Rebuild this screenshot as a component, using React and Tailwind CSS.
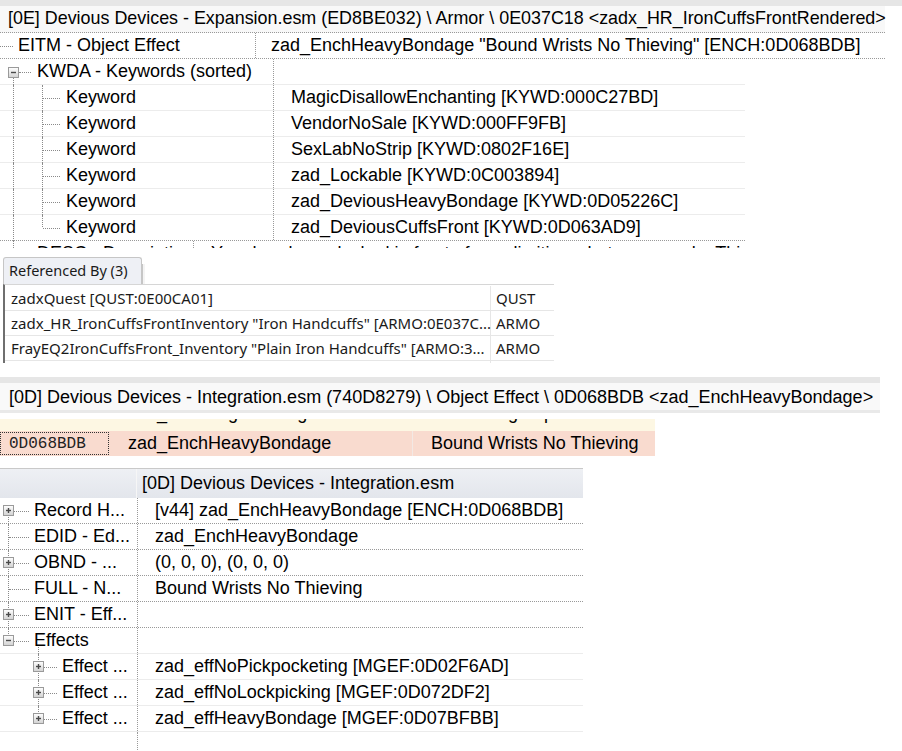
import React from "react";

const ARIAL = { fontFamily: '"Liberation Sans", Arial, sans-serif' };

function Box({ minus = false }) {
  return (
    <svg width="11" height="11" viewBox="0 0 11 11" className="block">
      <defs>
        <linearGradient id="bg" x1="0" y1="0" x2="0" y2="1">
          <stop offset="0" stopColor="#ffffff" />
          <stop offset="1" stopColor="#d2d2d2" />
        </linearGradient>
      </defs>
      <rect x="0.5" y="0.5" width="10" height="10" fill="url(#bg)" stroke="#9a9a9a" />
      <path d="M3 5.5h5" stroke="#4a4a4a" strokeWidth="1.4" />
      {!minus && <path d="M5.5 3v5" stroke="#4a4a4a" strokeWidth="1.4" />}
    </svg>
  );
}

function Guide({ x, top = 0, bottom = 0 }) {
  return (
    <span
      className="absolute border-l border-dotted border-[#8a8a8a]"
      style={{ left: x, top, bottom }}
    />
  );
}
function Tick({ x1, x2 }) {
  return (
    <span
      className="absolute top-1/2 border-t border-dotted border-[#8a8a8a]"
      style={{ left: x1, width: x2 - x1 }}
    />
  );
}

const keywords = [
  "MagicDisallowEnchanting [KYWD:000C27BD]",
  "VendorNoSale [KYWD:000FF9FB]",
  "SexLabNoStrip [KYWD:0802F16E]",
  "zad_Lockable [KYWD:0C003894]",
  "zad_DeviousHeavyBondage [KYWD:0D05226C]",
  "zad_DeviousCuffsFront [KYWD:0D063AD9]",
];

function Section1() {
  return (
    <div className="text-[18px] text-black" style={ARIAL}>
      <div className="h-[6px] bg-[#e6e6e6]" />
      <div className="h-[27px] w-[885px] bg-[#f8f8f8] pl-[8px] flex items-center whitespace-nowrap border-b border-dotted border-[#999] leading-none text-[17.9px]">
        [0E] Devious Devices - Expansion.esm (ED8BE032) \ Armor \ 0E037C18 &lt;zadx_HR_IronCuffsFrontRendered&gt;
      </div>
      <div className="h-[26px] w-[885px] flex border-b border-dotted border-[#999]">
        <div className="relative w-[256px] h-full border-r border-dotted border-[#999] flex items-center pl-[18px] whitespace-nowrap">
          <Tick x1={0} x2={13} />
          EITM - Object Effect
        </div>
        <div className="flex items-center pl-[15px] whitespace-nowrap">
          zad_EnchHeavyBondage "Bound Wrists No Thieving" [ENCH:0D068BDB]
        </div>
      </div>
      <div className="h-[26px] w-[745px] flex border-b border-[#ececec]">
        <div className="relative w-[274px] h-full border-r border-dotted border-[#999] flex items-center pl-[37px] whitespace-nowrap">
          <Guide x={13} top={18} bottom={-1} />
          <span className="absolute left-[8px] top-[8px]"><Box minus /></span>
          <Tick x1={19} x2={31} />
          KWDA - Keywords (sorted)
        </div>
        <div />
      </div>
      {keywords.map((k, i) => {
        const last = i === keywords.length - 1;
        return (
          <div
            key={k}
            className={
              "h-[26px] w-[745px] flex " +
              (last ? "border-b border-dotted border-[#999]" : "border-b border-[#ececec]")
            }
          >
            <div className="relative w-[274px] h-full border-r border-dotted border-[#999] flex items-center pl-[66px] whitespace-nowrap">
              <Guide x={13} top={0} bottom={-1} />
              <Guide x={42} top={0} bottom={last ? 13 : -1} />
              <Tick x1={43} x2={60} />
              Keyword
            </div>
            <div className="flex items-center pl-[17px] whitespace-nowrap">{k}</div>
          </div>
        );
      })}
      {/* clipped DESC row: only the tops of the letters show */}
      <div className="h-[7px] w-[745px] overflow-hidden flex">
        <div className="relative w-[274px] h-[7px] border-r border-dotted border-[#999] pl-[37px] whitespace-nowrap">
          <Guide x={13} top={0} bottom={0} />
          <div className="leading-[18px] mt-[3px]">DESC - Description</div>
        </div>
        <div className="pl-[17px] whitespace-nowrap leading-[18px] mt-[3px]">
          Your hands are locked in front of you, limiting what you can do. This device
        </div>
      </div>
    </div>
  );
}

const refs = [
  ["zadxQuest [QUST:0E00CA01]", "QUST"],
  ['zadx_HR_IronCuffsFrontInventory "Iron Handcuffs" [ARMO:0E037C...', "ARMO"],
  ['FrayEQ2IronCuffsFront_Inventory "Plain Iron Handcuffs" [ARMO:3...', "ARMO"],
];

function Section2() {
  return (
    <div
      className="mt-[9px] text-[15px] text-[#1a1a1a]"
      style={{ fontFamily: '"Noto Sans", "Open Sans", sans-serif' }}
    >
      <div className="flex items-end h-[27px] ml-[3px]">
        <div className="w-[139px] h-[27px] bg-[#eef0f5] border border-b-0 border-[#c6c6c6] rounded-t-[3px] flex items-center pl-[5px] whitespace-nowrap text-[14.5px]">
          Referenced By (3)
        </div>
        <div className="w-[3px] h-[20px] border-l border-[#c6c6c6] bg-[#f4f4f4]" />
      </div>
      <div className="ml-[3px] w-[551px] border-l-[2px] border-l-[#6f6f6f] border-t border-t-[#d6d6d6] pt-[1px] h-[79px]">
        {refs.map(([a, b]) => (
          <div key={a} className="h-[25px] flex border-b border-[#e6e6e6]">
            <div className="w-[486px] h-full flex items-center pl-[6px] whitespace-nowrap border-r border-[#e6e6e6]">
              {a}
            </div>
            <div className="flex items-center pl-[5px]">{b}</div>
          </div>
        ))}
        <div className="h-[2px] flex">
          <div className="w-[486px] border-r border-[#e6e6e6]" />
        </div>
      </div>
    </div>
  );
}

function Section3() {
  return (
    <div className="mt-[14px] text-[18px] text-black" style={ARIAL}>
      <div className="h-[6px] w-[880px] bg-[#e6e6e6]" />
      <div className="h-[27px] w-[880px] bg-[#f9f9f9] pl-[9px] flex items-center whitespace-nowrap leading-none">
        [0D] Devious Devices - Integration.esm (740D8279) \ Object Effect \ 0D068BDB &lt;zad_EnchHeavyBondage&gt;
      </div>
      <div className="h-[3px] w-[880px] bg-[#e9e9e9]" />
      <div className="h-[6px]" />
      {/* clipped previous row: only descenders show */}
      <div className="h-[12px] w-[655px] bg-[#fdf7e3] overflow-hidden flex">
        <div className="w-[110px]" />
        <div className="w-[303px] pl-[18px] whitespace-nowrap">
          <div className="leading-[18px] mt-[-15px]">zad_EnchLegsBinding</div>
        </div>
        <div className="pl-[18px] whitespace-nowrap">
          <div className="leading-[18px] mt-[-15px]">Bound Legs Speed</div>
        </div>
      </div>
      <div className="h-[25px] w-[655px] bg-[#f9dbcf] flex">
        <div className="w-[110px] h-full flex items-center">
          <div
            className="w-[109px] h-[23px] border border-dotted border-[#333] flex items-center pl-[8px] text-[16px] text-[#222]"
            style={{ fontFamily: '"Liberation Mono", "DejaVu Sans Mono", monospace' }}
          >
            0D068BDB
          </div>
        </div>
        <div className="w-[303px] h-full flex items-center pl-[18px] border-r border-[#f3e9e4] whitespace-nowrap">
          zad_EnchHeavyBondage
        </div>
        <div className="flex items-center pl-[18px] whitespace-nowrap">Bound Wrists No Thieving</div>
      </div>
    </div>
  );
}

const rows4 = [
  { l: 0, box: "plus", name: "Record H...", val: "[v44] zad_EnchHeavyBondage [ENCH:0D068BDB]", dotted: true },
  { l: 0, box: null, name: "EDID - Ed...", val: "zad_EnchHeavyBondage", dotted: true },
  { l: 0, box: "plus", name: "OBND - ...", val: "(0, 0, 0), (0, 0, 0)", dotted: true },
  { l: 0, box: null, name: "FULL - N...", val: "Bound Wrists No Thieving", dotted: true },
  { l: 0, box: "plus", name: "ENIT - Eff...", val: "", dotted: true },
  { l: 0, box: "minus", name: "Effects", val: "", dotted: false },
  { l: 1, box: "plus", name: "Effect ...", val: "zad_effNoPickpocketing [MGEF:0D02F6AD]", dotted: false },
  { l: 1, box: "plus", name: "Effect ...", val: "zad_effNoLockpicking [MGEF:0D072DF2]", dotted: false },
  { l: 1, box: "plus", name: "Effect ...", val: "zad_effHeavyBondage [MGEF:0D07BFBB]", dotted: false },
];

function Section4() {
  return (
    <div className="mt-[12px] text-[18px] text-black" style={ARIAL}>
      <div className="w-[583px] h-[30px] border-t border-[#c9c9c9] bg-gradient-to-b from-[#eef0f4] to-[#e3e6ec] flex">
        <div className="w-[137px] h-full border-r border-[#f6f6f6]" />
        <div className="flex items-center pl-[5px] whitespace-nowrap">[0D] Devious Devices - Integration.esm</div>
      </div>
      {rows4.map((r, i) => {
        const isEffects = r.name === "Effects";
        const lastTop = i === 5;
        const lastChild = i === rows4.length - 1;
        return (
          <div
            key={i}
            className={
              "h-[26px] w-[583px] flex " +
              (r.dotted ? "border-b border-dotted border-[#999]" : "border-b border-[#ececec]")
            }
          >
            <div className="relative w-[138px] h-full border-r border-dotted border-[#999] flex items-center whitespace-nowrap">
              <Guide x={8} top={i === 0 ? 13 : 0} bottom={lastTop || r.l === 1 ? (lastTop ? 13 : 26) : -1} />
              {r.l === 0 && (
                <>
                  {r.box && (
                    <span className="absolute left-[3px] top-[7px] z-10">
                      <Box minus={r.box === "minus"} />
                    </span>
                  )}
                  <Tick x1={r.box ? 14 : 9} x2={29} />
                  <span className="pl-[34px]">{r.name}</span>
                </>
              )}
              {isEffects && <Guide x={38} top={19} bottom={-1} />}
              {r.l === 1 && (
                <>
                  <Guide x={38} top={0} bottom={lastChild ? 13 : -1} />
                  <span className="absolute left-[33px] top-[7px] z-10">
                    <Box />
                  </span>
                  <Tick x1={44} x2={57} />
                  <span className="pl-[62px]">{r.name}</span>
                </>
              )}
            </div>
            <div className="flex items-center pl-[17px] whitespace-nowrap">{r.val}</div>
          </div>
        );
      })}
      <div className="h-[20px] w-[138px] border-r border-dotted border-[#999]" />
    </div>
  );
}

export default function App() {
  return (
    <div className="w-[902px] h-[751px] overflow-hidden bg-white">
      <Section1 />
      <Section2 />
      <Section3 />
      <Section4 />
    </div>
  );
}
